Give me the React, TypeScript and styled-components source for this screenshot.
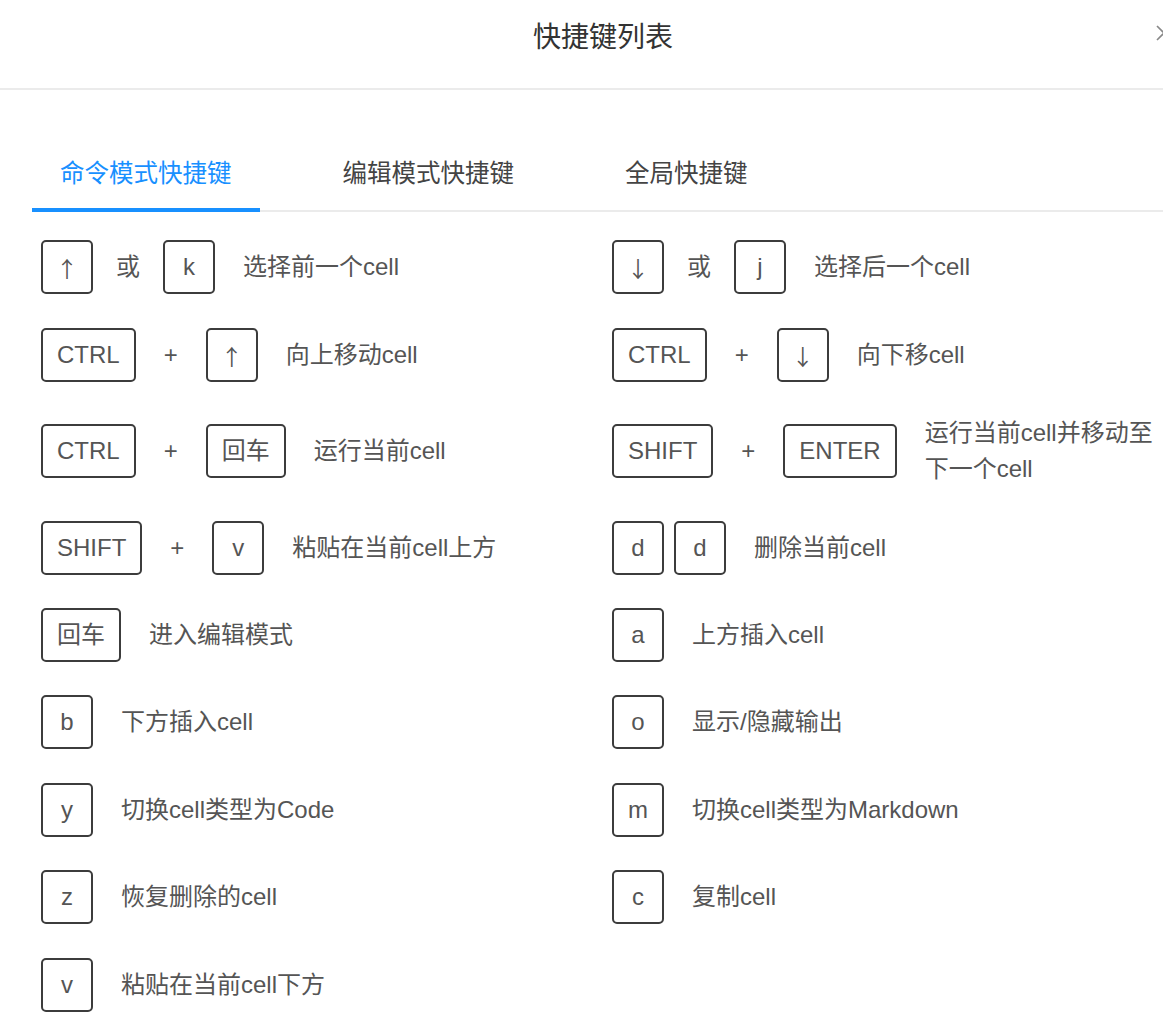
import React from "react";
import styled, { createGlobalStyle } from "styled-components";

const GlobalStyle = createGlobalStyle`
  html, body {
    margin: 0;
    padding: 0;
    background: #fff;
    overflow: hidden;
  }
  body {
    font-family: "Liberation Sans", Arial, "Noto Sans CJK SC", sans-serif;
  }
`;

const Modal = styled.div`
  width: 1206px;
  background: #fff;
`;

const Header = styled.div`
  display: grid;
  grid-template-columns: 1fr auto 1fr;
  height: 88px;
  padding: 0 32px;
  border-bottom: 2px solid #ebebeb;
  box-sizing: content-box;
`;

const Title = styled.h2`
  margin: 20px 0 0;
  font-size: 28px;
  line-height: 36px;
  font-weight: normal;
  color: #333;
`;

const Close = styled.button`
  justify-self: end;
  align-self: start;
  margin-top: 23px;
  width: 20px;
  height: 20px;
  padding: 0;
  border: 0;
  background: none;
  cursor: pointer;
`;

const Body = styled.div`
  padding: 48px 32px 0;
`;

const TabBar = styled.div`
  display: flex;
  gap: 55px;
  border-bottom: 2px solid #ebebeb;
`;

const Tab = styled.div<{ $active?: boolean }>`
  padding: 18px 28px 16px;
  margin-bottom: -2px;
  font-size: 24.5px;
  line-height: 36px;
  color: ${(p) => (p.$active ? "#1890ff" : "#444")};
  border-bottom: 4px solid ${(p) => (p.$active ? "#1890ff" : "transparent")};
`;

const List = styled.div`
  display: grid;
  grid-template-columns: 1fr 1fr;
  row-gap: 33px;
  align-items: center;
  height: 772px;
  padding-top: 28px;
  overflow: hidden;
  border-bottom: 2px solid #ebebeb;
`;

const Row = styled.div`
  display: flex;
  align-items: center;
  padding: 0 8px 0 9px;
`;

const Keys = styled.div`
  display: flex;
  align-items: center;
  gap: 10px;
  flex-shrink: 0;
`;

const Key = styled.span<{ $arrow?: boolean }>`
  display: inline-block;
  min-width: 52px;
  height: 54px;
  box-sizing: border-box;
  padding: ${(p) => (p.$arrow ? "0" : "0 14px")};
  border: 2px solid #3c3c3c;
  border-radius: 5px;
  font-family: ${(p) =>
    p.$arrow ? '"Noto Sans CJK SC", sans-serif' : "inherit"};
  font-size: ${(p) => (p.$arrow ? "22px" : "24px")};
  line-height: 50px;
  text-align: center;
  color: #555;
`;

const Sep = styled.span`
  width: 70px;
  margin: 0 -10px;
  text-align: center;
  font-size: 24px;
  line-height: 36px;
  color: #555;
`;

const Desc = styled.div`
  margin-left: 28px;
  font-size: 24px;
  line-height: 36px;
  color: #555;
`;

type Item = { keys: string[]; sep?: string; desc: string };

const left: Item[] = [
  { keys: ["↑", "k"], sep: "或", desc: "选择前一个cell" },
  { keys: ["CTRL", "↑"], sep: "+", desc: "向上移动cell" },
  { keys: ["CTRL", "回车"], sep: "+", desc: "运行当前cell" },
  { keys: ["SHIFT", "v"], sep: "+", desc: "粘贴在当前cell上方" },
  { keys: ["回车"], desc: "进入编辑模式" },
  { keys: ["b"], desc: "下方插入cell" },
  { keys: ["y"], desc: "切换cell类型为Code" },
  { keys: ["z"], desc: "恢复删除的cell" },
  { keys: ["v"], desc: "粘贴在当前cell下方" },
];

const right: Item[] = [
  { keys: ["↓", "j"], sep: "或", desc: "选择后一个cell" },
  { keys: ["CTRL", "↓"], sep: "+", desc: "向下移cell" },
  { keys: ["SHIFT", "ENTER"], sep: "+", desc: "运行当前cell并移动至下一个cell" },
  { keys: ["d", "d"], desc: "删除当前cell" },
  { keys: ["a"], desc: "上方插入cell" },
  { keys: ["o"], desc: "显示/隐藏输出" },
  { keys: ["m"], desc: "切换cell类型为Markdown" },
  { keys: ["c"], desc: "复制cell" },
];

const isArrow = (k: string) => k === "↑" || k === "↓";

function Shortcut({ item }: { item: Item }) {
  return (
    <Row>
      <Keys>
        {item.keys.map((k, i) => (
          <React.Fragment key={i}>
            {i > 0 && item.sep && <Sep>{item.sep}</Sep>}
            <Key $arrow={isArrow(k)}>{k}</Key>
          </React.Fragment>
        ))}
      </Keys>
      <Desc>{item.desc}</Desc>
    </Row>
  );
}

export default function App() {
  const rows: (Item | null)[] = [];
  for (let i = 0; i < left.length; i++) {
    rows.push(left[i]);
    rows.push(right[i] ?? null);
  }

  return (
    <Modal>
      <GlobalStyle />
      <Header>
        <span />
        <Title>快捷键列表</Title>
        <Close aria-label="close">
          <svg width="20" height="20" viewBox="0 0 20 20">
            <path d="M3 3 L17 17 M17 3 L3 17" stroke="#888" strokeWidth="1.6" fill="none" />
          </svg>
        </Close>
      </Header>
      <Body>
        <TabBar>
          <Tab $active>命令模式快捷键</Tab>
          <Tab>编辑模式快捷键</Tab>
          <Tab>全局快捷键</Tab>
        </TabBar>
        <List>
          {rows.map((item, i) =>
            item ? <Shortcut key={i} item={item} /> : <div key={i} />
          )}
        </List>
      </Body>
    </Modal>
  );
}
